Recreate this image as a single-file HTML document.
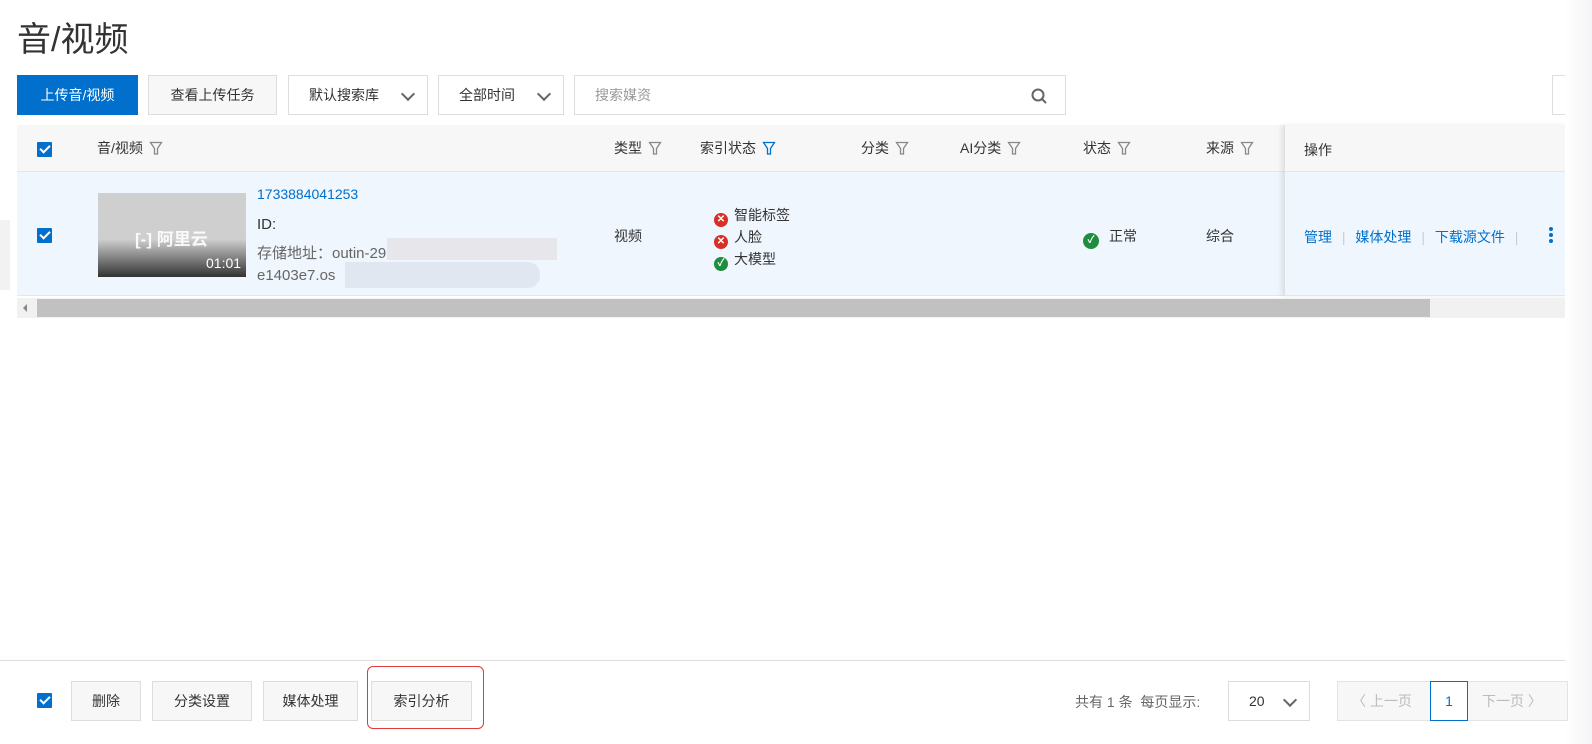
<!DOCTYPE html>
<html><head><meta charset="utf-8"><style>
*{box-sizing:border-box;margin:0;padding:0}
body{width:1592px;height:744px;background:#fff;font-family:"Liberation Sans","Noto Sans CJK SC",sans-serif;font-size:14px;color:#333;position:relative;overflow:hidden}
.a{position:absolute}
.btn{position:absolute;height:40px;border:1px solid #ddd;background:#f7f7f7;line-height:38px;text-align:center;font-size:14px;color:#333}
.sel{position:absolute;height:40px;border:1px solid #ddd;background:#fff;line-height:38px;padding-left:20px;font-size:14px;color:#333}
.chev{position:absolute;right:14px;top:13px;width:10px;height:10px;border-right:2px solid #666;border-bottom:2px solid #666;transform:rotate(45deg)}
.cb{position:absolute;width:15px;height:15px;background:#0070cc;border-radius:1px}
.cb:after{content:"";position:absolute;left:5px;top:1px;width:4px;height:8px;border-right:2px solid #fff;border-bottom:2px solid #fff;transform:rotate(45deg)}
.th{position:absolute;top:138px;font-size:14px;color:#333}
.f{display:inline-block;vertical-align:-3px;margin-left:6px}
.ic{display:inline-block;width:14px;height:14px;border-radius:50%;color:#fff;font-size:10px;line-height:14px;text-align:center;vertical-align:-2px;margin-right:6px;font-weight:bold}
.link{color:#0070cc}
</style></head><body>
<div class="a" style="left:17px;top:12px;font-size:34px;color:#333">音/视频</div>
<div class="btn" style="left:17px;top:75px;width:121px;background:#0070cc;border-color:#0070cc;color:#fff">上传音/视频</div>
<div class="btn" style="left:148px;top:75px;width:129px">查看上传任务</div>
<div class="sel" style="left:288px;top:75px;width:140px">默认搜索库<span class="chev"></span></div>
<div class="sel" style="left:438px;top:75px;width:126px">全部时间<span class="chev"></span></div>
<div class="sel" style="left:574px;top:75px;width:492px;color:#999">搜索媒资
<svg class="a" style="right:18px;top:12px" width="16" height="16" viewBox="0 0 16 16"><circle cx="7" cy="7" r="5.5" fill="none" stroke="#666" stroke-width="2"/><path d="M11 11l4 4" stroke="#666" stroke-width="2"/></svg></div>
<div class="a" style="left:1552px;top:75px;width:40px;height:40px;border:1px solid #ddd"></div>

<div class="a" style="left:17px;top:125px;width:1551px;height:47px;background:#f7f7f7;border-bottom:1px solid #e6e6e6"></div>
<div class="a" style="left:17px;top:172px;width:1551px;height:124px;background:#eff6fd;border-bottom:1px solid #e6e6e6"></div>
<div class="a" style="left:0;top:220px;width:10px;height:70px;background:#f2f2f2"></div>
<div class="cb" style="left:37px;top:142px"></div>
<div class="cb" style="left:37px;top:228px"></div>
<svg width="0" height="0" style="position:absolute"><defs><g id="fl"><path d="M1.5 1.5h11l-4 6v5.5h-3v-5.5z" fill="none" stroke="#888" stroke-width="1.3"/></g></defs></svg>
<div class="th" style="left:97px">音/视频<svg class="f" width="14" height="15"><use href="#fl"/></svg></div>
<div class="th" style="left:614px">类型<svg class="f" width="14" height="15"><use href="#fl"/></svg></div>
<div class="th" style="left:700px">索引状态<svg class="f" width="14" height="15"><path d="M1.5 1.5h11l-4 6v5.5h-3v-5.5z" fill="none" stroke="#0070cc" stroke-width="1.3"/></svg></div>
<div class="th" style="left:861px">分类<svg class="f" width="14" height="15"><use href="#fl"/></svg></div>
<div class="th" style="left:960px">AI分类<svg class="f" width="14" height="15"><use href="#fl"/></svg></div>
<div class="th" style="left:1083px">状态<svg class="f" width="14" height="15"><use href="#fl"/></svg></div>
<div class="th" style="left:1206px">来源<svg class="f" width="14" height="15"><use href="#fl"/></svg></div>

<div class="a" style="left:98px;top:193px;width:148px;height:84px;background:linear-gradient(#cfcfcf 0,#cfcfcf 55%,#333 100%)"></div>
<div class="a" style="left:135px;top:225px;color:#fff;font-size:17px;font-weight:bold;opacity:.9">[-] 阿里云</div>
<div class="a" style="left:206px;top:255px;color:#fff;font-size:14px">01:01</div>
<div class="a link" style="left:257px;top:186px">1733884041253</div>
<div class="a" style="left:257px;top:216px;font-size:15px">ID:</div>
<div class="a" style="left:257px;top:242px;color:#666;font-size:15px">存储地址：outin-29</div>
<div class="a" style="left:257px;top:267px;color:#666;font-size:15px">e1403e7.os</div>
<div class="a" style="left:387px;top:238px;width:170px;height:22px;background:#e2dfe3;opacity:.7"></div>
<div class="a" style="left:345px;top:262px;width:195px;height:26px;background:#dde4ee;opacity:.8;border-radius:0 12px 12px 0"></div>

<div class="a" style="left:614px;top:226px">视频</div>
<div class="a" style="left:714px;top:205px;line-height:20px">
<div><span class="ic" style="background:#d93026">✕</span>智能标签</div>
<div><span class="ic" style="background:#d93026">✕</span>人脸</div>
<div><span class="ic" style="background:#1e8e3e">✓</span>大模型</div></div>
<div class="a" style="left:1083px;top:226px"><span class="ic" style="background:#1e8e3e;width:16px;height:16px;line-height:16px;margin-right:10px">✓</span>正常</div>
<div class="a" style="left:1206px;top:226px">综合</div>

<div class="a" style="left:1284px;top:125px;width:284px;height:171px;box-shadow:-3px 0 4px rgba(0,0,0,.08);border-left:1px solid #e0e0e0"></div>
<div class="a" style="left:1304px;top:140px">操作</div>
<div class="a link" style="left:1304px;top:227px">管理 <span style="color:#ccc;margin:0 6px">|</span> 媒体处理 <span style="color:#ccc;margin:0 6px">|</span> 下载源文件 <span style="color:#ccc;margin:0 6px">|</span></div>
<div class="a" style="left:1549px;top:227px;width:4px;line-height:0">
<div style="width:4px;height:4px;border-radius:2px;background:#0070cc;margin-bottom:2px"></div><div style="width:4px;height:4px;border-radius:2px;background:#0070cc;margin-bottom:2px"></div><div style="width:4px;height:4px;border-radius:2px;background:#0070cc"></div></div>

<div class="a" style="left:17px;top:298px;width:1551px;height:20px;background:#f1f1f1"></div>
<div class="a" style="left:37px;top:299px;width:1393px;height:18px;background:#c1c1c1"></div>
<div class="a" style="left:23px;top:304px;width:0;height:0;border-top:4px solid transparent;border-bottom:4px solid transparent;border-right:4px solid #888"></div>

<div class="a" style="left:0;top:660px;width:1568px;height:1px;background:#ddd;box-shadow:0 -3px 6px rgba(0,0,0,.06)"></div>
<div class="a" style="left:1565px;top:0;width:27px;height:744px;background:linear-gradient(90deg,#fff,#f4f4f6)"></div>
<div class="cb" style="left:37px;top:693px"></div>
<div class="btn" style="left:71px;top:681px;width:70px">删除</div>
<div class="btn" style="left:152px;top:681px;width:100px">分类设置</div>
<div class="btn" style="left:263px;top:681px;width:95px">媒体处理</div>
<div class="btn" style="left:371px;top:681px;width:101px">索引分析</div>
<div class="a" style="left:367px;top:666px;width:117px;height:63px;border:1px solid #e03a3a;border-radius:6px"></div>
<div class="a" style="left:1075px;top:692px;color:#666">共有 1 条&nbsp;&nbsp;每页显示:</div>
<div class="sel" style="left:1228px;top:681px;width:82px">20<span class="chev"></span></div>
<div class="a" style="left:1337px;top:681px;width:231px;height:40px;border:1px solid #e3e3e3;background:#f7f7f7;color:#bbb;line-height:38px">
<span style="position:absolute;left:14px">〈&nbsp;上一页</span><span style="position:absolute;left:144px">下一页&nbsp;〉</span></div>
<div class="a" style="left:1430px;top:681px;width:38px;height:40px;border:1px solid #0070cc;background:#fff;color:#0070cc;text-align:center;line-height:38px">1</div>
</body></html>
